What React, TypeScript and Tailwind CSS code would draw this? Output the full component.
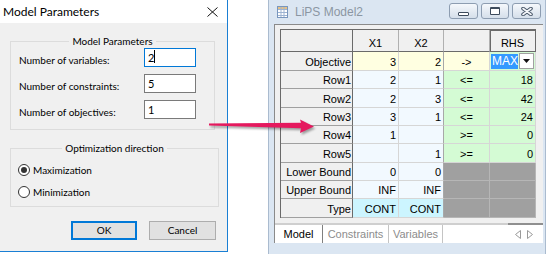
import React from "react";

type Cell = { v?: string; bg: string; center?: boolean; max?: boolean };

const YEL = "bg-[#ffffe1]";
const BLU = "bg-[#f2f9ff]";
const GRN = "bg-[#d4fbd4]";
const GRY = "bg-[#a0a0a0]";
const CYN = "bg-[#ccf5ff]";

const gridRows: { label: string; cells: Cell[] }[] = [
  {
    label: "Objective",
    cells: [
      { v: "3", bg: YEL },
      { v: "2", bg: YEL },
      { v: "->", bg: YEL, center: true },
      { bg: GRN, max: true },
    ],
  },
  {
    label: "Row1",
    cells: [
      { v: "2", bg: BLU },
      { v: "1", bg: BLU },
      { v: "<=", bg: GRN, center: true },
      { v: "18", bg: GRN },
    ],
  },
  {
    label: "Row2",
    cells: [
      { v: "2", bg: BLU },
      { v: "3", bg: BLU },
      { v: "<=", bg: GRN, center: true },
      { v: "42", bg: GRN },
    ],
  },
  {
    label: "Row3",
    cells: [
      { v: "3", bg: BLU },
      { v: "1", bg: BLU },
      { v: "<=", bg: GRN, center: true },
      { v: "24", bg: GRN },
    ],
  },
  {
    label: "Row4",
    cells: [
      { v: "1", bg: BLU },
      { v: "", bg: BLU },
      { v: ">=", bg: GRN, center: true },
      { v: "0", bg: GRN },
    ],
  },
  {
    label: "Row5",
    cells: [
      { v: "", bg: BLU },
      { v: "1", bg: BLU },
      { v: ">=", bg: GRN, center: true },
      { v: "0", bg: GRN },
    ],
  },
  {
    label: "Lower Bound",
    cells: [
      { v: "0", bg: BLU },
      { v: "0", bg: BLU },
      { bg: GRY },
      { bg: GRY },
    ],
  },
  {
    label: "Upper Bound",
    cells: [
      { v: "INF", bg: BLU },
      { v: "INF", bg: BLU },
      { bg: GRY },
      { bg: GRY },
    ],
  },
  {
    label: "Type",
    cells: [
      { v: "CONT", bg: CYN },
      { v: "CONT", bg: CYN },
      { bg: GRY },
      { bg: GRY },
    ],
  },
];

const params = [
  { label: "Number of variables:", value: "2", focused: true },
  { label: "Number of constraints:", value: "5" },
  { label: "Number of objectives:", value: "1" },
];

function Radio({ checked, label }: { checked?: boolean; label: string }) {
  return (
    <div className="flex items-center h-[14px] gap-[3px]">
      <div className="w-[12px] h-[12px] rounded-full border border-[#333] bg-white flex items-center justify-center">
        {checked && <div className="w-[6px] h-[6px] rounded-full bg-[#333]" />}
      </div>
      <span className="leading-[14px]">{label}</span>
    </div>
  );
}

function ModelDialog() {
  return (
    <div className="w-[228px] h-[252px] shrink-0 flex flex-col bg-[#f0f0f0] border-r border-b border-[#1a7fd4] font-['Lato',sans-serif] text-[10px] text-black">
      <div className="h-[23px] shrink-0 bg-white flex items-center justify-between pl-[3px] pr-[9px]">
        <span className="text-[12px]">Model Parameters</span>
        <svg width="11" height="10" viewBox="0 0 11 10">
          <path d="M0.5 0.5L10.5 9.5M10.5 0.5L0.5 9.5" stroke="#111" strokeWidth="1" />
        </svg>
      </div>
      <div className="flex flex-col px-[10px] pt-[11px]">
        <fieldset className="w-[205px] border border-[#dcdcdc] pb-[10px]">
          <legend className="mx-auto px-[3px] leading-[14px]">Model Parameters</legend>
          <div className="flex flex-col gap-[7px] pl-[8px]">
            {params.map((p) => (
              <div key={p.label} className="flex items-end">
                <span className="w-[125px] leading-[14px]">{p.label}</span>
                <div
                  className={
                    p.focused
                      ? "w-[52px] h-[19px] bg-white border border-[#0078d7] pl-[3px] text-[11px] leading-[17px] flex"
                      : "w-[52px] h-[19px] bg-white border border-[#7a7a7a] pl-[3px] text-[11px] leading-[17px] flex"
                  }
                >
                  <span>{p.value}</span>
                  {p.focused && <span className="w-[1px] h-[13px] mt-[1px] bg-black" />}
                </div>
              </div>
            ))}
          </div>
        </fieldset>
        <fieldset className="w-[209px] mt-[11px] border border-[#dcdcdc] pb-[7px]">
          <legend className="mx-auto px-[3px] leading-[14px]">Optimization direction</legend>
          <div className="flex flex-col gap-[8px] pl-[7px] mt-[8px]">
            <Radio checked label="Maximization" />
            <Radio label="Minimization" />
          </div>
        </fieldset>
        <div className="flex justify-end gap-[12px] pr-[1px] mt-[14px]">
          <div className="w-[66px] h-[19px] border-2 border-[#0078d7] bg-[#e1e1e1] flex items-center justify-center">
            OK
          </div>
          <div className="w-[67px] h-[19px] border border-[#adadad] bg-[#e1e1e1] flex items-center justify-center">
            Cancel
          </div>
        </div>
      </div>
    </div>
  );
}

function GridIcon() {
  return (
    <svg width="11" height="12" viewBox="0 0 11 12">
      <rect x="0.5" y="0.5" width="10" height="11" fill="#fff" stroke="#7896bd" />
      <rect x="1" y="1" width="9" height="2" fill="#e7c184" />
      <path d="M1 3.5H10M1 6.5H10M1 9.5H10M4 1V11M7 1V11" stroke="#9db4d3" strokeWidth="1" />
    </svg>
  );
}

function CaptionButton({ w, children }: { w: string; children: React.ReactNode }) {
  return (
    <div
      className={`${w} h-[16px] rounded-[3px] border border-[#8d9db1] bg-gradient-to-b from-[#f5f8fc] to-[#d5dfea] flex items-center justify-center`}
    >
      {children}
    </div>
  );
}

function DataGrid() {
  return (
    <div className="w-[256px] grid grid-cols-[72px_46px_45px_46px_46px] grid-rows-[22px_19px_18px_19px_18px_18px_19px_18px_18px_19px] border-l border-t border-[#6a6a6a] text-[11px] leading-[13px] text-black">
      <div className="bg-[#f0f0f0] border-r border-b border-[#6a6a6a]" />
      <div className="bg-[#f0f0f0] border-r border-[#b0b0b0] border-b border-b-[#6a6a6a] flex items-end justify-center pb-[1px]">X1</div>
      <div className="bg-[#f0f0f0] border-r border-[#b0b0b0] border-b border-b-[#6a6a6a] flex items-end justify-center pb-[1px]">X2</div>
      <div className="bg-[#f0f0f0] border-r border-[#b0b0b0] border-b border-b-[#6a6a6a]" />
      <div className="bg-[#f0f0f0] border-r border-b border-[#6a6a6a] shadow-[inset_1px_1px_0_#6a6a6a] flex items-end justify-center pb-[1px]">RHS</div>
      {gridRows.map((row) => (
        <React.Fragment key={row.label}>
          <div className="bg-[#f0f0f0] border-b border-[#a0a0a0] border-r border-r-[#6a6a6a] flex items-end justify-end pr-[1px] pb-[1px]">
            {row.label}
          </div>
          {row.cells.map((c, i) =>
            c.max ? (
              <div key={i} className={`${c.bg} border-r border-b border-[#d6d6d6] flex items-center pl-[1px] gap-[1px]`}>
                <span className="w-[27px] h-[15px] bg-[#3399ff] text-white text-[12px] leading-[15px] pl-[1px]">MAX</span>
                <span className="w-[15px] h-[16px] bg-white border border-[#a0a0a0] flex items-center justify-center">
                  <svg width="7" height="4" viewBox="0 0 7 4">
                    <path d="M0 0H7L3.5 4Z" fill="#111" />
                  </svg>
                </span>
              </div>
            ) : (
              <div
                key={i}
                className={
                  c.bg === GRY
                    ? `${c.bg} border-r border-b border-[#b6b6b6]`
                    : i === 1
                      ? `${c.bg} border-r border-r-[#a8a8a8] border-b border-b-[#d6d6d6] flex items-end justify-end pr-[2px] pb-[1px]`
                      : c.center
                        ? `${c.bg} border-r border-b border-[#d6d6d6] flex items-end justify-center pb-[1px]`
                        : `${c.bg} border-r border-b border-[#d6d6d6] flex items-end justify-end pr-[2px] pb-[1px]`
                }
              >
                {c.v}
              </div>
            )
          )}
        </React.Fragment>
      ))}
    </div>
  );
}

function TabStrip() {
  return (
    <div className="h-[20px] shrink-0 flex flex-col bg-white text-[11px]">
      <div className="h-[2px] flex bg-[#cfcfcf]">
        <div className="ml-auto w-[35px] bg-[#8f8f8f]" />
      </div>
      <div className="flex-1 flex items-stretch">
        <div className="w-[48px] border-r border-[#808080] flex items-center justify-center text-black">Model</div>
        <div className="w-[66px] border-r border-[#c4c4c4] flex items-center justify-center text-[#8c8c8c]">Constraints</div>
        <div className="w-[54px] border-r border-[#c4c4c4] flex items-center justify-center text-[#8c8c8c]">Variables</div>
        <div className="ml-auto flex items-center gap-[6px] pr-[10px]">
          <svg width="6" height="9" viewBox="0 0 6 9">
            <path d="M5.5 0.5V8.5L0.5 4.5Z" fill="none" stroke="#9a9a9a" />
          </svg>
          <svg width="6" height="9" viewBox="0 0 6 9">
            <path d="M0.5 0.5V8.5L5.5 4.5Z" fill="none" stroke="#9a9a9a" />
          </svg>
        </div>
      </div>
    </div>
  );
}

function LipsWindow() {
  return (
    <div className="ml-[40px] w-[278px] h-[254px] shrink-0 flex flex-col bg-[#dbe6f2] border-l border-r border-[#aabbcf] font-['Liberation_Sans',Arial,sans-serif]">
      <div className="h-[24px] shrink-0 flex items-start pl-[8px] pr-[4px]">
        <div className="mt-[6px]">
          <GridIcon />
        </div>
        <span className="ml-[7px] mt-[5px] text-[12px] leading-[14px] text-[#8b96a2]">LiPS Model2</span>
        <div className="ml-auto mt-[3px] flex gap-[3px]">
          <CaptionButton w="w-[29px]">
            <div className="w-[11px] h-[4px] mt-[5px] border border-[#3d4b5c] bg-white rounded-[1px]" />
          </CaptionButton>
          <CaptionButton w="w-[28px]">
            <div className="w-[10px] h-[8px] border border-[#3d4b5c] border-t-2 bg-white rounded-[1px]" />
          </CaptionButton>
          <CaptionButton w="w-[29px]">
            <svg width="12" height="9" viewBox="0 0 12 9">
              <path d="M2 1.5L10 7.5M10 1.5L2 7.5" stroke="#4a586a" strokeWidth="3.6" strokeLinecap="round" />
              <path d="M2 1.5L10 7.5M10 1.5L2 7.5" stroke="#f4f6f9" strokeWidth="1.6" strokeLinecap="round" />
            </svg>
          </CaptionButton>
        </div>
      </div>
      <div className="ml-[5px] w-[269px] h-[219px] flex flex-col bg-[#f0f0f0] border-l border-t border-[#8a8a8a]">
        <div className="flex-1 pl-[5px] pt-[4px]">
          <DataGrid />
        </div>
        <TabStrip />
      </div>
    </div>
  );
}

function PointerArrow() {
  const pts = "209,123.5 301,122.8 300,119.5 314,126.5 300,133 301,128.3 209,125.5";
  return (
    <svg className="absolute left-[200px] top-[110px]" width="120" height="32" viewBox="200 110 120 32">
      <defs>
        <filter id="arrowShadow" x="-10%" y="-50%" width="120%" height="200%">
          <feGaussianBlur stdDeviation="1" />
        </filter>
      </defs>
      <polygon points={pts} fill="rgba(0,0,0,0.35)" transform="translate(1.5,2)" filter="url(#arrowShadow)" />
      <polygon points={pts} fill="#e5195e" />
    </svg>
  );
}

export default function App() {
  return (
    <div className="relative flex w-[550px] h-[254px] bg-white overflow-hidden">
      <ModelDialog />
      <LipsWindow />
      <PointerArrow />
    </div>
  );
}
